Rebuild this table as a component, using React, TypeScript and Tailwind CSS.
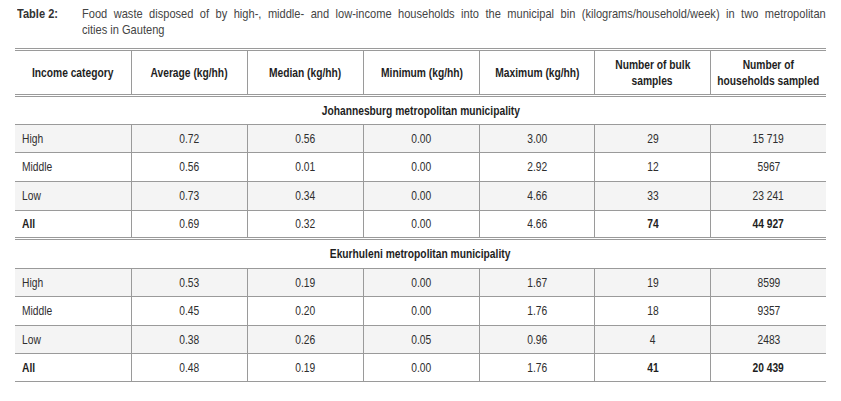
// Arial Narrow is not installed: Liberation Sans squeezed horizontally stands in for it.
const cols = "grid grid-cols-[116px_116px_116px_116px_115px_116px_116px]";
const line = "border-[#9a9a9a]";

type Row = {
  label: string;
  values: string[];
  h: string;
  shaded?: boolean;
  total?: boolean;
  double?: boolean;
};

const johannesburg: Row[] = [
  { label: "High", values: ["0.72", "0.56", "0.00", "3.00", "29", "15 719"], h: "h-[28px]", shaded: true },
  { label: "Middle", values: ["0.56", "0.01", "0.00", "2.92", "12", "5967"], h: "h-[29px]" },
  { label: "Low", values: ["0.73", "0.34", "0.00", "4.66", "33", "23 241"], h: "h-[29px]", shaded: true },
  { label: "All", values: ["0.69", "0.32", "0.00", "4.66", "74", "44 927"], h: "h-[29px]", total: true, double: true },
];

const ekurhuleni: Row[] = [
  { label: "High", values: ["0.53", "0.19", "0.00", "1.67", "19", "8599"], h: "h-[28px]", shaded: true },
  { label: "Middle", values: ["0.45", "0.20", "0.00", "1.76", "18", "9357"], h: "h-[29px]" },
  { label: "Low", values: ["0.38", "0.26", "0.05", "0.96", "4", "2483"], h: "h-[28px]", shaded: true },
  { label: "All", values: ["0.48", "0.19", "0.00", "1.76", "41", "20 439"], h: "h-[28px]", total: true },
];

const headers: string[][] = [
  ["Income category"],
  ["Average (kg/hh)"],
  ["Median (kg/hh)"],
  ["Minimum (kg/hh)"],
  ["Maximum (kg/hh)"],
  ["Number of bulk", "samples"],
  ["Number of", "households sampled"],
];

const Narrow = ({ children, left }: { children: React.ReactNode; left?: boolean }) => (
  <span
    className={`inline-block scale-x-[0.82] whitespace-nowrap ${left ? "origin-left" : "origin-center"}`}
  >
    {children}
  </span>
);

const DataRow = ({ row }: { row: Row }) => (
  <div
    className={`${cols} ${row.h} ${line} ${
      row.double ? "border-b-[3px] border-double" : "border-b"
    } ${row.shaded ? "bg-[#f4f4f4]" : "bg-white"}`}
  >
    <div className={`flex items-center pl-[7px] ${row.total ? "font-bold text-[#1e1e1e]" : ""}`}>
      <Narrow left>{row.label}</Narrow>
    </div>
    {row.values.map((v, i) => (
      <div
        key={i}
        className={`flex items-center justify-center border-l ${line} ${
          row.total && i >= 4 ? "font-bold text-[#1e1e1e]" : ""
        }`}
      >
        <Narrow>{v}</Narrow>
      </div>
    ))}
  </div>
);

const SectionRow = ({ title, h }: { title: string; h: string }) => (
  <div className={`flex ${h} items-center justify-center border-b ${line} font-bold text-[#1e1e1e]`}>
    <Narrow>{title}</Narrow>
  </div>
);

export default function App() {
  return (
    <div className="h-[401px] w-[841px] overflow-hidden bg-white px-[15px] font-['Liberation_Sans',Arial,sans-serif] text-[#2e2e2e]">
      {/* Caption */}
      <div className="flex pt-[6px] text-[13.5px] leading-[16px] text-[#444]">
        <div className="w-[67px] shrink-0 pl-[2px] font-bold text-[#333]">
          <Narrow left>Table 2:</Narrow>
        </div>
        <div className="w-[907px] shrink-0 origin-left scale-x-[0.82]">
          <p className="text-justify [text-align-last:justify]">
            Food waste disposed of by high-, middle- and low-income households into the municipal bin
            (kilograms/household/week) in two metropolitan
          </p>
          <p>cities in Gauteng</p>
        </div>
      </div>

      <div className={`mt-[10px] border-t-[3px] border-double ${line} text-[12.5px] leading-[16px]`}>
        <div className={`${cols} h-[46px] border-b-[3px] border-double ${line} font-bold text-[#1e1e1e]`}>
          {headers.map((h, i) => (
            <div
              key={h[0]}
              className={`flex flex-col items-center justify-center text-center ${
                i > 0 ? `border-l ${line}` : ""
              }`}
            >
              {h.map((t) => (
                <Narrow key={t}>{t}</Narrow>
              ))}
            </div>
          ))}
        </div>

        <SectionRow title="Johannesburg metropolitan municipality" h="h-[28px]" />
        {johannesburg.map((r) => (
          <DataRow key={"j" + r.label} row={r} />
        ))}

        <SectionRow title="Ekurhuleni metropolitan municipality" h="h-[29px]" />
        {ekurhuleni.map((r) => (
          <DataRow key={"e" + r.label} row={r} />
        ))}
      </div>
    </div>
  );
}
